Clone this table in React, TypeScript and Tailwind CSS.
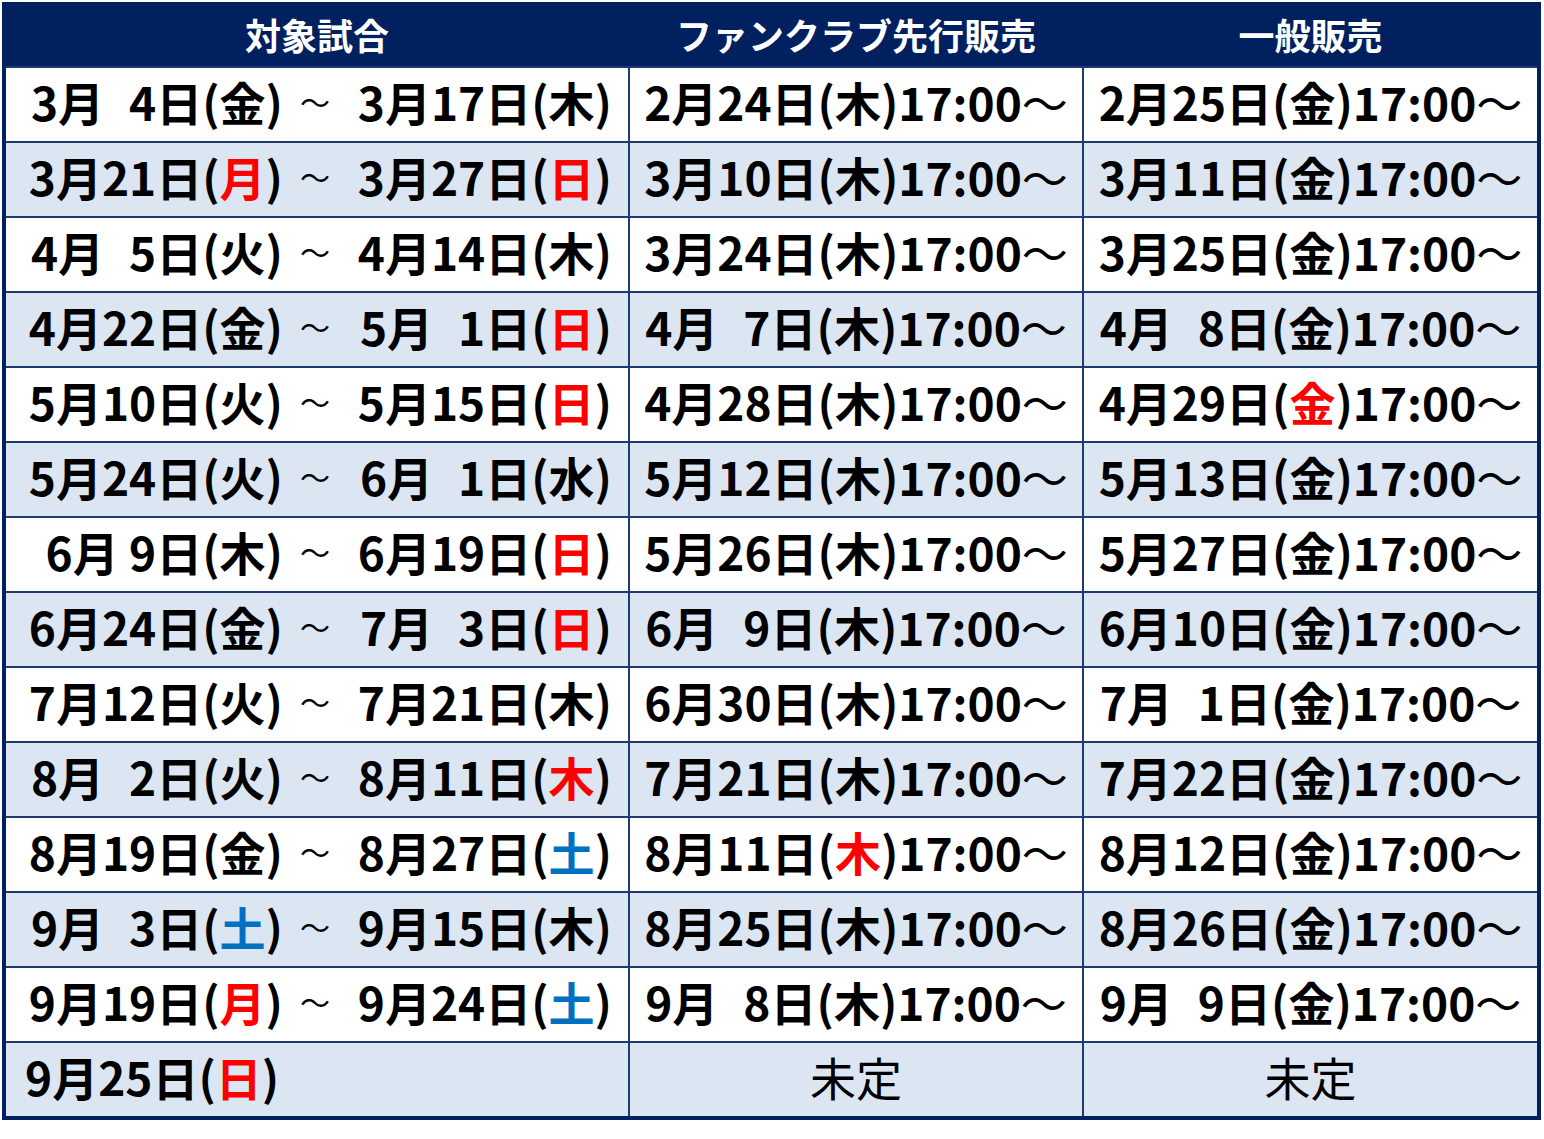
type D = { m: number; d: number; w: string; c?: "r" | "b"; narrow?: boolean };

type Row = { from: D; to?: D; fc?: D; gen?: D };

const dt = (m: number, d: number, w: string, c?: "r" | "b", narrow?: boolean): D => ({ m, d, w, c, narrow });

const rows: Row[] = [
  { from: dt(3, 4, "金"), to: dt(3, 17, "木"), fc: dt(2, 24, "木"), gen: dt(2, 25, "金") },
  { from: dt(3, 21, "月", "r"), to: dt(3, 27, "日", "r"), fc: dt(3, 10, "木"), gen: dt(3, 11, "金") },
  { from: dt(4, 5, "火"), to: dt(4, 14, "木"), fc: dt(3, 24, "木"), gen: dt(3, 25, "金") },
  { from: dt(4, 22, "金"), to: dt(5, 1, "日", "r"), fc: dt(4, 7, "木"), gen: dt(4, 8, "金") },
  { from: dt(5, 10, "火"), to: dt(5, 15, "日", "r"), fc: dt(4, 28, "木"), gen: dt(4, 29, "金", "r") },
  { from: dt(5, 24, "火"), to: dt(6, 1, "水"), fc: dt(5, 12, "木"), gen: dt(5, 13, "金") },
  { from: dt(6, 9, "木", undefined, true), to: dt(6, 19, "日", "r"), fc: dt(5, 26, "木"), gen: dt(5, 27, "金") },
  { from: dt(6, 24, "金"), to: dt(7, 3, "日", "r"), fc: dt(6, 9, "木"), gen: dt(6, 10, "金") },
  { from: dt(7, 12, "火"), to: dt(7, 21, "木"), fc: dt(6, 30, "木"), gen: dt(7, 1, "金") },
  { from: dt(8, 2, "火"), to: dt(8, 11, "木", "r"), fc: dt(7, 21, "木"), gen: dt(7, 22, "金") },
  { from: dt(8, 19, "金"), to: dt(8, 27, "土", "b"), fc: dt(8, 11, "木", "r"), gen: dt(8, 12, "金") },
  { from: dt(9, 3, "土", "b"), to: dt(9, 15, "木"), fc: dt(8, 25, "木"), gen: dt(8, 26, "金") },
  { from: dt(9, 19, "月", "r"), to: dt(9, 24, "土", "b"), fc: dt(9, 8, "木"), gen: dt(9, 9, "金") },
  { from: dt(9, 25, "日", "r") },
];

const DateText = ({ v }: { v: D }) => (
  <span className="whitespace-pre">
    {v.m}月
    {v.d < 10 && (v.narrow ? " " : <span className="inline-block w-[25px]" />)}
    {v.d}日(
    <span className={v.c === "r" ? "text-[#ff0000]" : v.c === "b" ? "text-[#0070c0]" : ""}>{v.w}</span>)
  </span>
);

const Sale = ({ v }: { v?: D }) =>
  v ? (
    <>
      <DateText v={v} />
      17:00<span className="font-normal">～</span>
    </>
  ) : (
    <span className="font-normal">未定</span>
  );

export default function App() {
  return (
    <div className="bg-white w-[1544px] h-[1139px] pt-[2px] pl-[2px]" style={{ fontFamily: '"Noto Sans CJK JP", "Noto Sans", sans-serif' }}>
      <div className="w-[1539px] border-4 border-[#002060] bg-[#1f3a6e]">
        <div className="grid grid-cols-[622px_452px_1fr] gap-x-[2px] bg-[#002060] h-[60px] text-white text-[36px] font-bold leading-none">
          <div className="flex items-center justify-center pb-[5px]">対象試合</div>
          <div className="flex items-center justify-center pb-[5px]">ファンクラブ先行販売</div>
          <div className="flex items-center justify-center pb-[5px]">一般販売</div>
        </div>
        <div className="grid grid-cols-[622px_452px_1fr] gap-[2px] pt-[2px] text-black text-[46px] font-bold leading-none">
          {rows.map((r, i) => {
            const bg = i % 2 === 0 ? "bg-white" : "bg-[#dce6f2]";
            return (
              <div key={i} className="contents">
                <div className={`${bg} h-[73px] flex items-center pb-[7px]`}>
                  {r.to ? (
                    <>
                      <span className="w-[277px] text-right">
                        <DateText v={r.from} />
                      </span>
                      <span className="w-[64px] text-center font-normal text-[30px]">～</span>
                      <span className="w-[265px] text-right">
                        <DateText v={r.to} />
                      </span>
                    </>
                  ) : (
                    <span className="pl-[19px]">
                      <DateText v={r.from} />
                    </span>
                  )}
                </div>
                <div className={`${bg} h-[73px] flex items-center justify-center pb-[7px]`}>
                  <Sale v={r.fc} />
                </div>
                <div className={`${bg} h-[73px] flex items-center justify-center pb-[7px]`}>
                  <Sale v={r.gen} />
                </div>
              </div>
            );
          })}
        </div>
      </div>
    </div>
  );
}
